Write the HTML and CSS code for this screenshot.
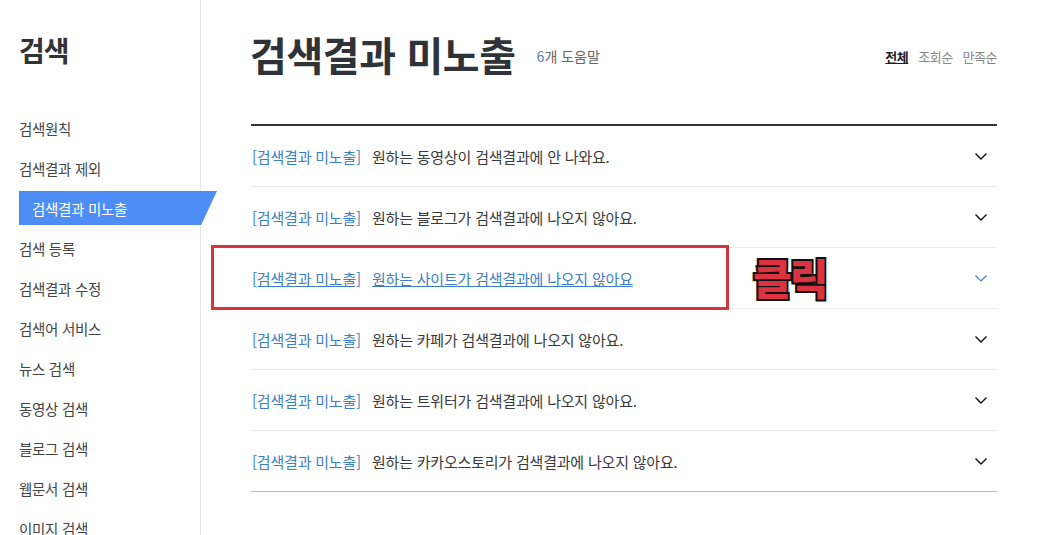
FILE: index.html
```html
<!DOCTYPE html>
<html lang="ko">
<head>
    <meta charset="UTF-8">
    <meta name="viewport" content="width=device-width, initial-scale=1">
    <title>검색결과 미노출 - 검색 도움말</title>
    <link rel="stylesheet" href="styles.css">
</head>
<body>
    <div class="wrapper">
        <aside class="sidebar">
            <h2 class="side-title">검색</h2>
            <ul class="side-nav">
                <li><a href="#">검색원칙</a></li>
                <li><a href="#">검색결과 제외</a></li>
                <li class="active"><a href="#">검색결과 미노출</a></li>
                <li><a href="#">검색 등록</a></li>
                <li><a href="#">검색결과 수정</a></li>
                <li><a href="#">검색어 서비스</a></li>
                <li><a href="#">뉴스 검색</a></li>
                <li><a href="#">동영상 검색</a></li>
                <li><a href="#">블로그 검색</a></li>
                <li><a href="#">웹문서 검색</a></li>
                <li><a href="#">이미지 검색</a></li>
            </ul>
        </aside>
        <main class="content">
            <header class="page-head">
                <h1>검색결과 미노출</h1>
                <span class="count"><em>6</em>개 도움말</span>
                <nav class="sort">
                    <a href="#" class="on">전체</a>
                    <a href="#">조회순</a>
                    <a href="#">만족순</a>
                </nav>
            </header>
            <ul class="faq-list">
                <li class="faq-item">
                    <a href="#"><span class="tag">[검색결과 미노출]</span>원하는 동영상이 검색결과에 안 나와요.</a>
                    <svg class="chevron" width="12" height="7" viewBox="0 0 12 7"><polyline points="0.5,0.5 6,6 11.5,0.5" fill="none" stroke="currentColor" stroke-width="1.4"/></svg>
                </li>
                <li class="faq-item">
                    <a href="#"><span class="tag">[검색결과 미노출]</span>원하는 블로그가 검색결과에 나오지 않아요.</a>
                    <svg class="chevron" width="12" height="7" viewBox="0 0 12 7"><polyline points="0.5,0.5 6,6 11.5,0.5" fill="none" stroke="currentColor" stroke-width="1.4"/></svg>
                </li>
                <li class="faq-item hover">
                    <a href="#"><span class="tag">[검색결과 미노출]</span>원하는 사이트가 검색결과에 나오지 않아요</a>
                    <svg class="chevron" width="12" height="7" viewBox="0 0 12 7"><polyline points="0.5,0.5 6,6 11.5,0.5" fill="none" stroke="currentColor" stroke-width="1.2"/></svg>
                    <div class="mark-box"></div>
                    <div class="mark-label">클릭</div>
                </li>
                <li class="faq-item">
                    <a href="#"><span class="tag">[검색결과 미노출]</span>원하는 카페가 검색결과에 나오지 않아요.</a>
                    <svg class="chevron" width="12" height="7" viewBox="0 0 12 7"><polyline points="0.5,0.5 6,6 11.5,0.5" fill="none" stroke="currentColor" stroke-width="1.4"/></svg>
                </li>
                <li class="faq-item">
                    <a href="#"><span class="tag">[검색결과 미노출]</span>원하는 트위터가 검색결과에 나오지 않아요.</a>
                    <svg class="chevron" width="12" height="7" viewBox="0 0 12 7"><polyline points="0.5,0.5 6,6 11.5,0.5" fill="none" stroke="currentColor" stroke-width="1.4"/></svg>
                </li>
                <li class="faq-item">
                    <a href="#"><span class="tag">[검색결과 미노출]</span>원하는 카카오스토리가 검색결과에 나오지 않아요.</a>
                    <svg class="chevron" width="12" height="7" viewBox="0 0 12 7"><polyline points="0.5,0.5 6,6 11.5,0.5" fill="none" stroke="currentColor" stroke-width="1.4"/></svg>
                </li>
            </ul>
        </main>
    </div>
</body>
</html>
```

FILE: styles.css
```css
body, h1, h2, ul {
    margin: 0;
    padding: 0;
    box-sizing: border-box;
}

body {
    font-family: 'Noto Sans CJK KR', 'Noto Sans', sans-serif;
    background-color: #fff;
    color: #333;
    overflow: hidden;
}

a {
    color: inherit;
    text-decoration: none;
}

.wrapper {
    display: flex;
    height: 535px;
}

/* sidebar */
.sidebar {
    width: 200px;
    flex-shrink: 0;
    border-right: 1px solid #e6e6e6;
    padding-top: 28px;
}

.side-title {
    font-size: 28px;
    font-weight: 700;
    line-height: 44px;
    color: #333;
    padding-left: 19px;
    letter-spacing: -1px;
}

.side-nav {
    list-style: none;
    margin-top: 36px;
}

.side-nav li {
    height: 40px;
    display: flex;
    align-items: center;
    padding-left: 19px;
    font-size: 14.5px;
    color: #444;
    letter-spacing: -0.3px;
}

.side-nav li.active a {
    display: flex;
    align-items: center;
    flex-shrink: 0;
    height: 34px;
    width: 198px;
    padding-left: 13px;
    box-sizing: border-box;
    color: #fff;
    background-color: #4d8df5;
    clip-path: polygon(0 0, 100% 0, 92% 100%, 0 100%);
}

/* content */
.content {
    flex: 1;
    padding: 0 64px 0 50px;
}

.page-head {
    display: flex;
    align-items: center;
    height: 126px;
    padding-bottom: 16px;
    box-sizing: border-box;
    border-bottom: 2px solid #333;
}

.page-head h1 {
    font-size: 40px;
    font-weight: 700;
    color: #2f3237;
    letter-spacing: -0.4px;
    margin-left: -1px;
}

.count {
    margin-left: 21px;
    margin-top: 4px;
    font-size: 14px;
    color: #666;
}

.count em {
    font-style: normal;
    color: #4b7fc4;
}

.sort {
    margin-left: auto;
    margin-top: 4px;
    display: flex;
    gap: 10px;
    font-size: 13px;
    color: #888;
    letter-spacing: -0.5px;
}

.sort a.on {
    color: #222;
    font-weight: 700;
    text-decoration: underline;
}

.faq-list {
    list-style: none;
}

.faq-item {
    position: relative;
    display: flex;
    align-items: center;
    height: 61px;
    box-sizing: border-box;
    padding-left: 1px;
    border-bottom: 1px solid #ececec;
    font-size: 15px;
    color: #3a3a3a;
    letter-spacing: -0.2px;
}

.faq-item:last-child {
    border-bottom-color: #bdbdbd;
}

.faq-item .tag {
    color: #3c7fc6;
    margin-right: 11px;
}

.chevron {
    margin-left: auto;
    margin-right: 10px;
    color: #111;
}

.faq-item.hover a {
    color: #3c7fc6;
    text-decoration: underline;
}

.faq-item.hover .chevron {
    color: #4b7fc4;
}

/* screenshot annotation */
.mark-box {
    position: absolute;
    left: -40px;
    top: -3px;
    width: 518px;
    height: 65px;
    box-sizing: border-box;
    border: 3px solid #d6343f;
}

.mark-label {
    position: absolute;
    left: 502px;
    top: -1px;
    font-size: 42px;
    font-weight: 900;
    line-height: 60px;
    color: #dc3340;
    letter-spacing: -2px;
    -webkit-text-stroke: 4px #111;
    paint-order: stroke fill;
}
```
